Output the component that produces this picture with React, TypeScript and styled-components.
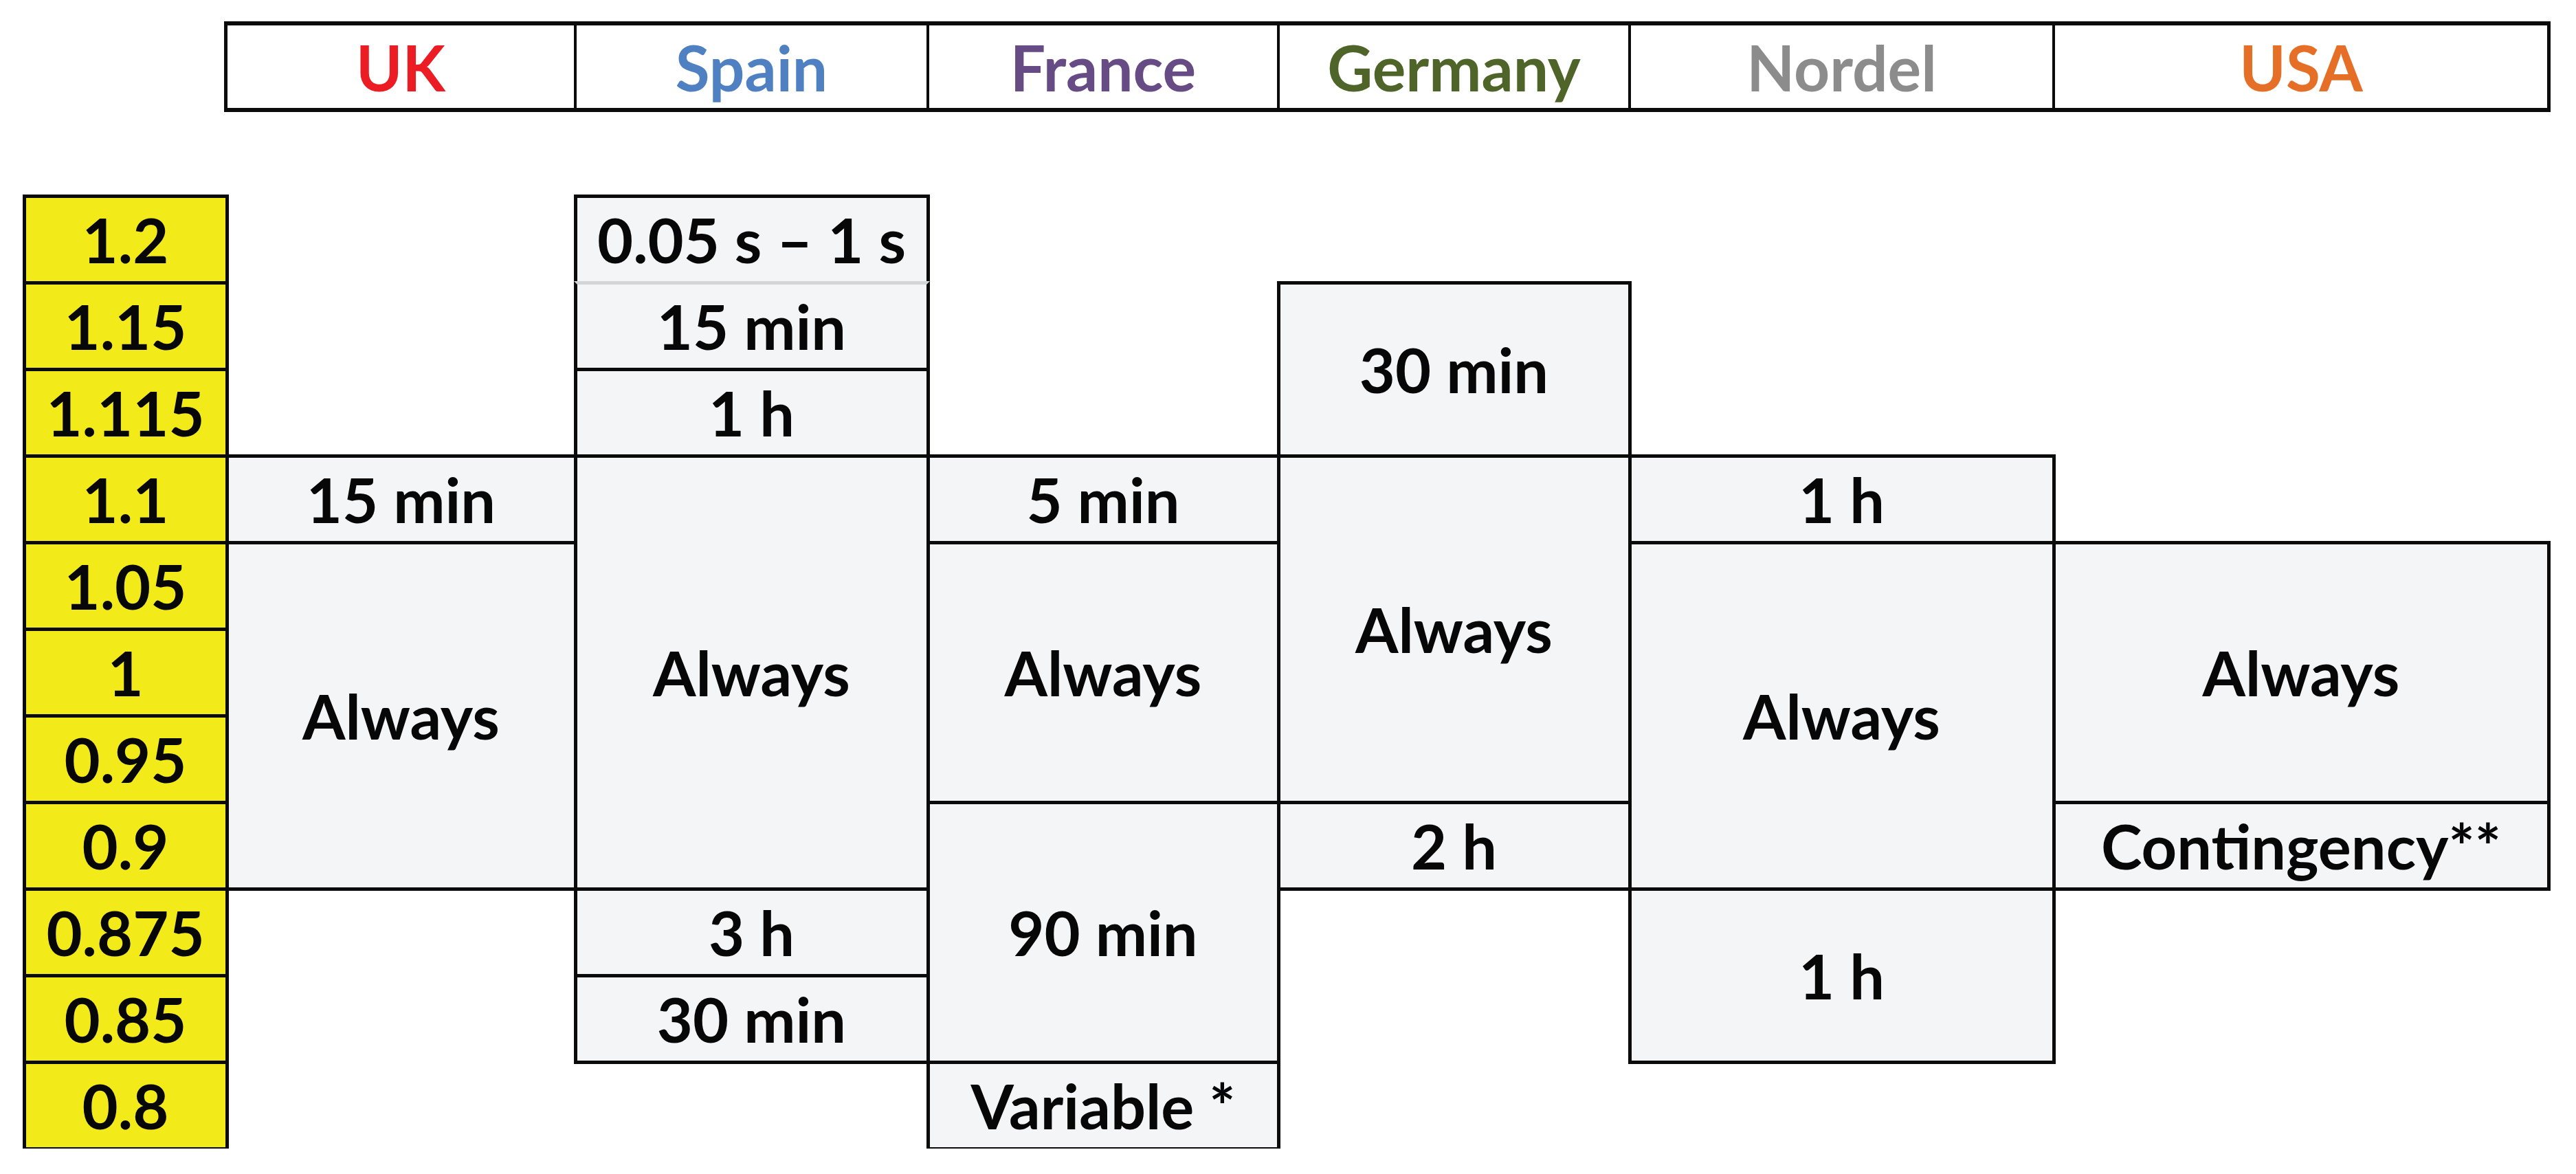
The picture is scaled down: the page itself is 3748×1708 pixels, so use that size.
import styled, { createGlobalStyle } from 'styled-components';

const GlobalStyle = createGlobalStyle`
    html, body {
        margin: 0;
        padding: 0;
        background: #fff;
    }
    body {
        font-family: Lato, "Open Sans", "Liberation Sans", sans-serif;
    }
`;

const Board = styled.div`
    display: grid;
    grid-template-columns: 295px 507px 513px 510px 511px 617px 720px;
    grid-template-rows: 132px 122px repeat(11, 126px);
    padding: 31px 0 0 35px;
    width: max-content;
`;

const Header = styled.div`
    grid-column: 2 / 8;
    grid-row: 1;
    margin: 0 -3px 0 -4px;
    display: grid;
    grid-template-columns: 508px 513px 510px 511px 617px 1fr;
    border: 5px solid #0b0b0b;
    border-top-width: 6px;
    border-bottom-width: 6px;
    background: #fff;
`;

const HeaderCell = styled.div<{ $color: string; $last?: boolean }>`
    display: flex;
    align-items: center;
    justify-content: center;
    border-right: ${p => (p.$last ? 'none' : '4px solid #0b0b0b')};
    color: ${p => p.$color};
    font-size: 91px;
    font-weight: 700;
`;

const Cell = styled.div<{ $col: number; $row: number; $span?: number; $level?: boolean; $softTop?: boolean; $softBottom?: boolean }>`
    grid-column: ${p => p.$col};
    grid-row: ${p => p.$row + 2} / span ${p => p.$span ?? 1};
    margin: -2.5px;
    display: flex;
    align-items: center;
    justify-content: center;
    border: 5px solid #0b0b0b;
    ${p => (p.$softTop ? 'border-top-color: #d4d5d7;' : '')}
    ${p => (p.$softBottom ? 'border-bottom-color: #d4d5d7;' : '')}
    background: ${p => (p.$level ? '#f2ea19' : '#f4f5f7')};
    color: #070707;
    font-size: 90px;
    font-weight: 700;
    white-space: nowrap;
    position: relative;
    z-index: ${p => (p.$softTop || p.$softBottom ? 1 : 0)};
`;

const countries = [
    { name: 'UK', color: '#ec1c24' },
    { name: 'Spain', color: '#4f81c2' },
    { name: 'France', color: '#664b85' },
    { name: 'Germany', color: '#4f6429' },
    { name: 'Nordel', color: '#8c8c8c' },
    { name: 'USA', color: '#e66f28' },
];

const levels = ['1.2', '1.15', '1.115', '1.1', '1.05', '1', '0.95', '0.9', '0.875', '0.85', '0.8'];

// col is the grid column (2 = UK ... 7 = USA), row is the level index from 1
const spans = [
    { col: 2, row: 4, span: 1, text: '15 min' },
    { col: 2, row: 5, span: 4, text: 'Always' },
    { col: 3, row: 1, span: 1, text: '0.05 s – 1 s', softBottom: true },
    { col: 3, row: 2, span: 1, text: '15 min', softTop: true },
    { col: 3, row: 3, span: 1, text: '1 h' },
    { col: 3, row: 4, span: 5, text: 'Always' },
    { col: 3, row: 9, span: 1, text: '3 h' },
    { col: 3, row: 10, span: 1, text: '30 min' },
    { col: 4, row: 4, span: 1, text: '5 min' },
    { col: 4, row: 5, span: 3, text: 'Always' },
    { col: 4, row: 8, span: 3, text: '90 min' },
    { col: 4, row: 11, span: 1, text: 'Variable *' },
    { col: 5, row: 2, span: 2, text: '30 min' },
    { col: 5, row: 4, span: 4, text: 'Always' },
    { col: 5, row: 8, span: 1, text: '2 h' },
    { col: 6, row: 4, span: 1, text: '1 h' },
    { col: 6, row: 5, span: 4, text: 'Always' },
    { col: 6, row: 9, span: 2, text: '1 h' },
    { col: 7, row: 5, span: 3, text: 'Always' },
    { col: 7, row: 8, span: 1, text: 'Contingency**' },
];

export default function App() {
    return (
        <>
            <GlobalStyle />
            <Board>
                <Header>
                    {countries.map((c, i) => (
                        <HeaderCell key={c.name} $color={c.color} $last={i === countries.length - 1}>
                            {c.name}
                        </HeaderCell>
                    ))}
                </Header>
                {levels.map((l, i) => (
                    <Cell key={l} $col={1} $row={i + 1} $level>
                        {l}
                    </Cell>
                ))}
                {spans.map(s => (
                    <Cell
                        key={`${s.col}-${s.row}`}
                        $col={s.col}
                        $row={s.row}
                        $span={s.span}
                        $softTop={s.softTop}
                        $softBottom={s.softBottom}
                    >
                        {s.text}
                    </Cell>
                ))}
            </Board>
        </>
    );
}
